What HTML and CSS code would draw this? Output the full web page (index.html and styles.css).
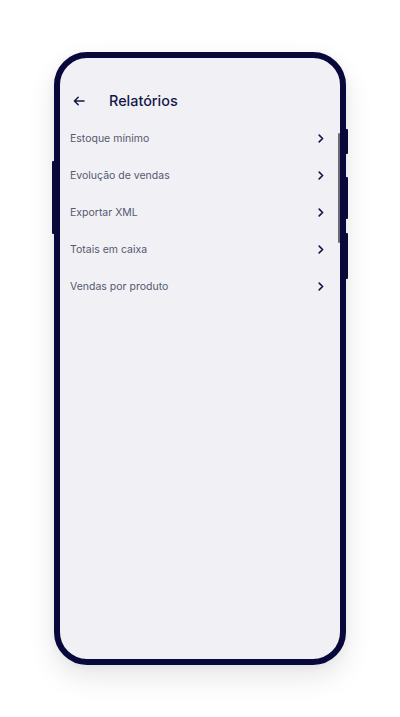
FILE: index.html
```html
<!DOCTYPE html>
<html lang="pt-BR">
<head>
<meta charset="utf-8">
<title>Relatórios</title>
<link rel="stylesheet" href="styles.css">
</head>
<body>
<div class="phone">
  <span class="btn btn-left"></span>
  <span class="btn btn-r1"></span>
  <span class="btn btn-r2"></span>
  <span class="btn btn-r3"></span>
  <span class="scroll"></span>
  <div class="screen">
    <header class="header">
      <svg class="back" width="12" height="10" viewBox="0 0 12 10" aria-hidden="true">
        <path d="M11 5H1.5M5.2 1.2L1.4 5l3.8 3.8" fill="none" stroke="#14164a" stroke-width="1.5" stroke-linecap="round" stroke-linejoin="round"/>
      </svg>
      <h1 class="title">Relatórios</h1>
    </header>
    <ul class="list">
      <li class="row"><span>Estoque mínimo</span><svg class="chev" width="6" height="9" viewBox="0 0 6 9"><path d="M1.2 1.1L4.6 4.5 1.2 7.9" fill="none" stroke="#14164a" stroke-width="1.6" stroke-linecap="round" stroke-linejoin="round"/></svg></li>
      <li class="row"><span>Evolução de vendas</span><svg class="chev" width="6" height="9" viewBox="0 0 6 9"><path d="M1.2 1.1L4.6 4.5 1.2 7.9" fill="none" stroke="#14164a" stroke-width="1.6" stroke-linecap="round" stroke-linejoin="round"/></svg></li>
      <li class="row"><span>Exportar XML</span><svg class="chev" width="6" height="9" viewBox="0 0 6 9"><path d="M1.2 1.1L4.6 4.5 1.2 7.9" fill="none" stroke="#14164a" stroke-width="1.6" stroke-linecap="round" stroke-linejoin="round"/></svg></li>
      <li class="row"><span>Totais em caixa</span><svg class="chev" width="6" height="9" viewBox="0 0 6 9"><path d="M1.2 1.1L4.6 4.5 1.2 7.9" fill="none" stroke="#14164a" stroke-width="1.6" stroke-linecap="round" stroke-linejoin="round"/></svg></li>
      <li class="row"><span>Vendas por produto</span><svg class="chev" width="6" height="9" viewBox="0 0 6 9"><path d="M1.2 1.1L4.6 4.5 1.2 7.9" fill="none" stroke="#14164a" stroke-width="1.6" stroke-linecap="round" stroke-linejoin="round"/></svg></li>
    </ul>
  </div>
</div>
</body>
</html>
```
FILE: styles.css
```css
* { box-sizing: border-box; }
html, body {
  margin: 0;
  padding: 0;
  background: #ffffff;
  width: 400px;
  height: 717px;
  overflow: hidden;
  font-family: Inter, "Noto Sans", "Liberation Sans", sans-serif;
}
body {
  padding-top: 52px;
  padding-left: 54px;
}
.phone {
  position: relative;
  width: 292px;
  height: 613px;
  border: 6px solid #08083a;
  border-radius: 33px;
  background: #f1f1f5;
  box-shadow: 0 12px 28px rgba(20, 20, 40, 0.10), 0 2px 10px rgba(20, 20, 40, 0.05);
}
.btn {
  position: absolute;
  background: #08083a;
  width: 3px;
  border-radius: 1px;
}
.btn-left { left: -8px; top: 103px; height: 73px; }
.btn-r1 { right: -8px; top: 71px; height: 25px; }
.btn-r2 { right: -8px; top: 119px; height: 42px; }
.btn-r3 { right: -8px; top: 175px; height: 46px; }
.scroll {
  position: absolute;
  right: 0px;
  top: 75px;
  width: 2px;
  height: 110px;
  background: #6b6b78;
  border-radius: 1px;
}
.screen {
  height: 100%;
  border-radius: 27px;
  overflow: hidden;
}
.header {
  display: flex;
  align-items: center;
  height: 20px;
  margin-top: 33px;
  padding-left: 13px;
}
.back { display: block; flex: none; }
.title {
  margin: 0 0 0 24px;
  font-size: 14.4px;
  font-weight: 500;
  color: #14164a;
  line-height: 20px;
  letter-spacing: 0;
}
.list {
  list-style: none;
  margin: 9.6px 0 0 0;
  padding: 0 16px 0 10px;
}
.row {
  display: flex;
  align-items: center;
  justify-content: space-between;
  height: 36.8px;
  font-size: 10.5px;
  color: #55586f;
}
.chev { display: block; flex: none; }
```
